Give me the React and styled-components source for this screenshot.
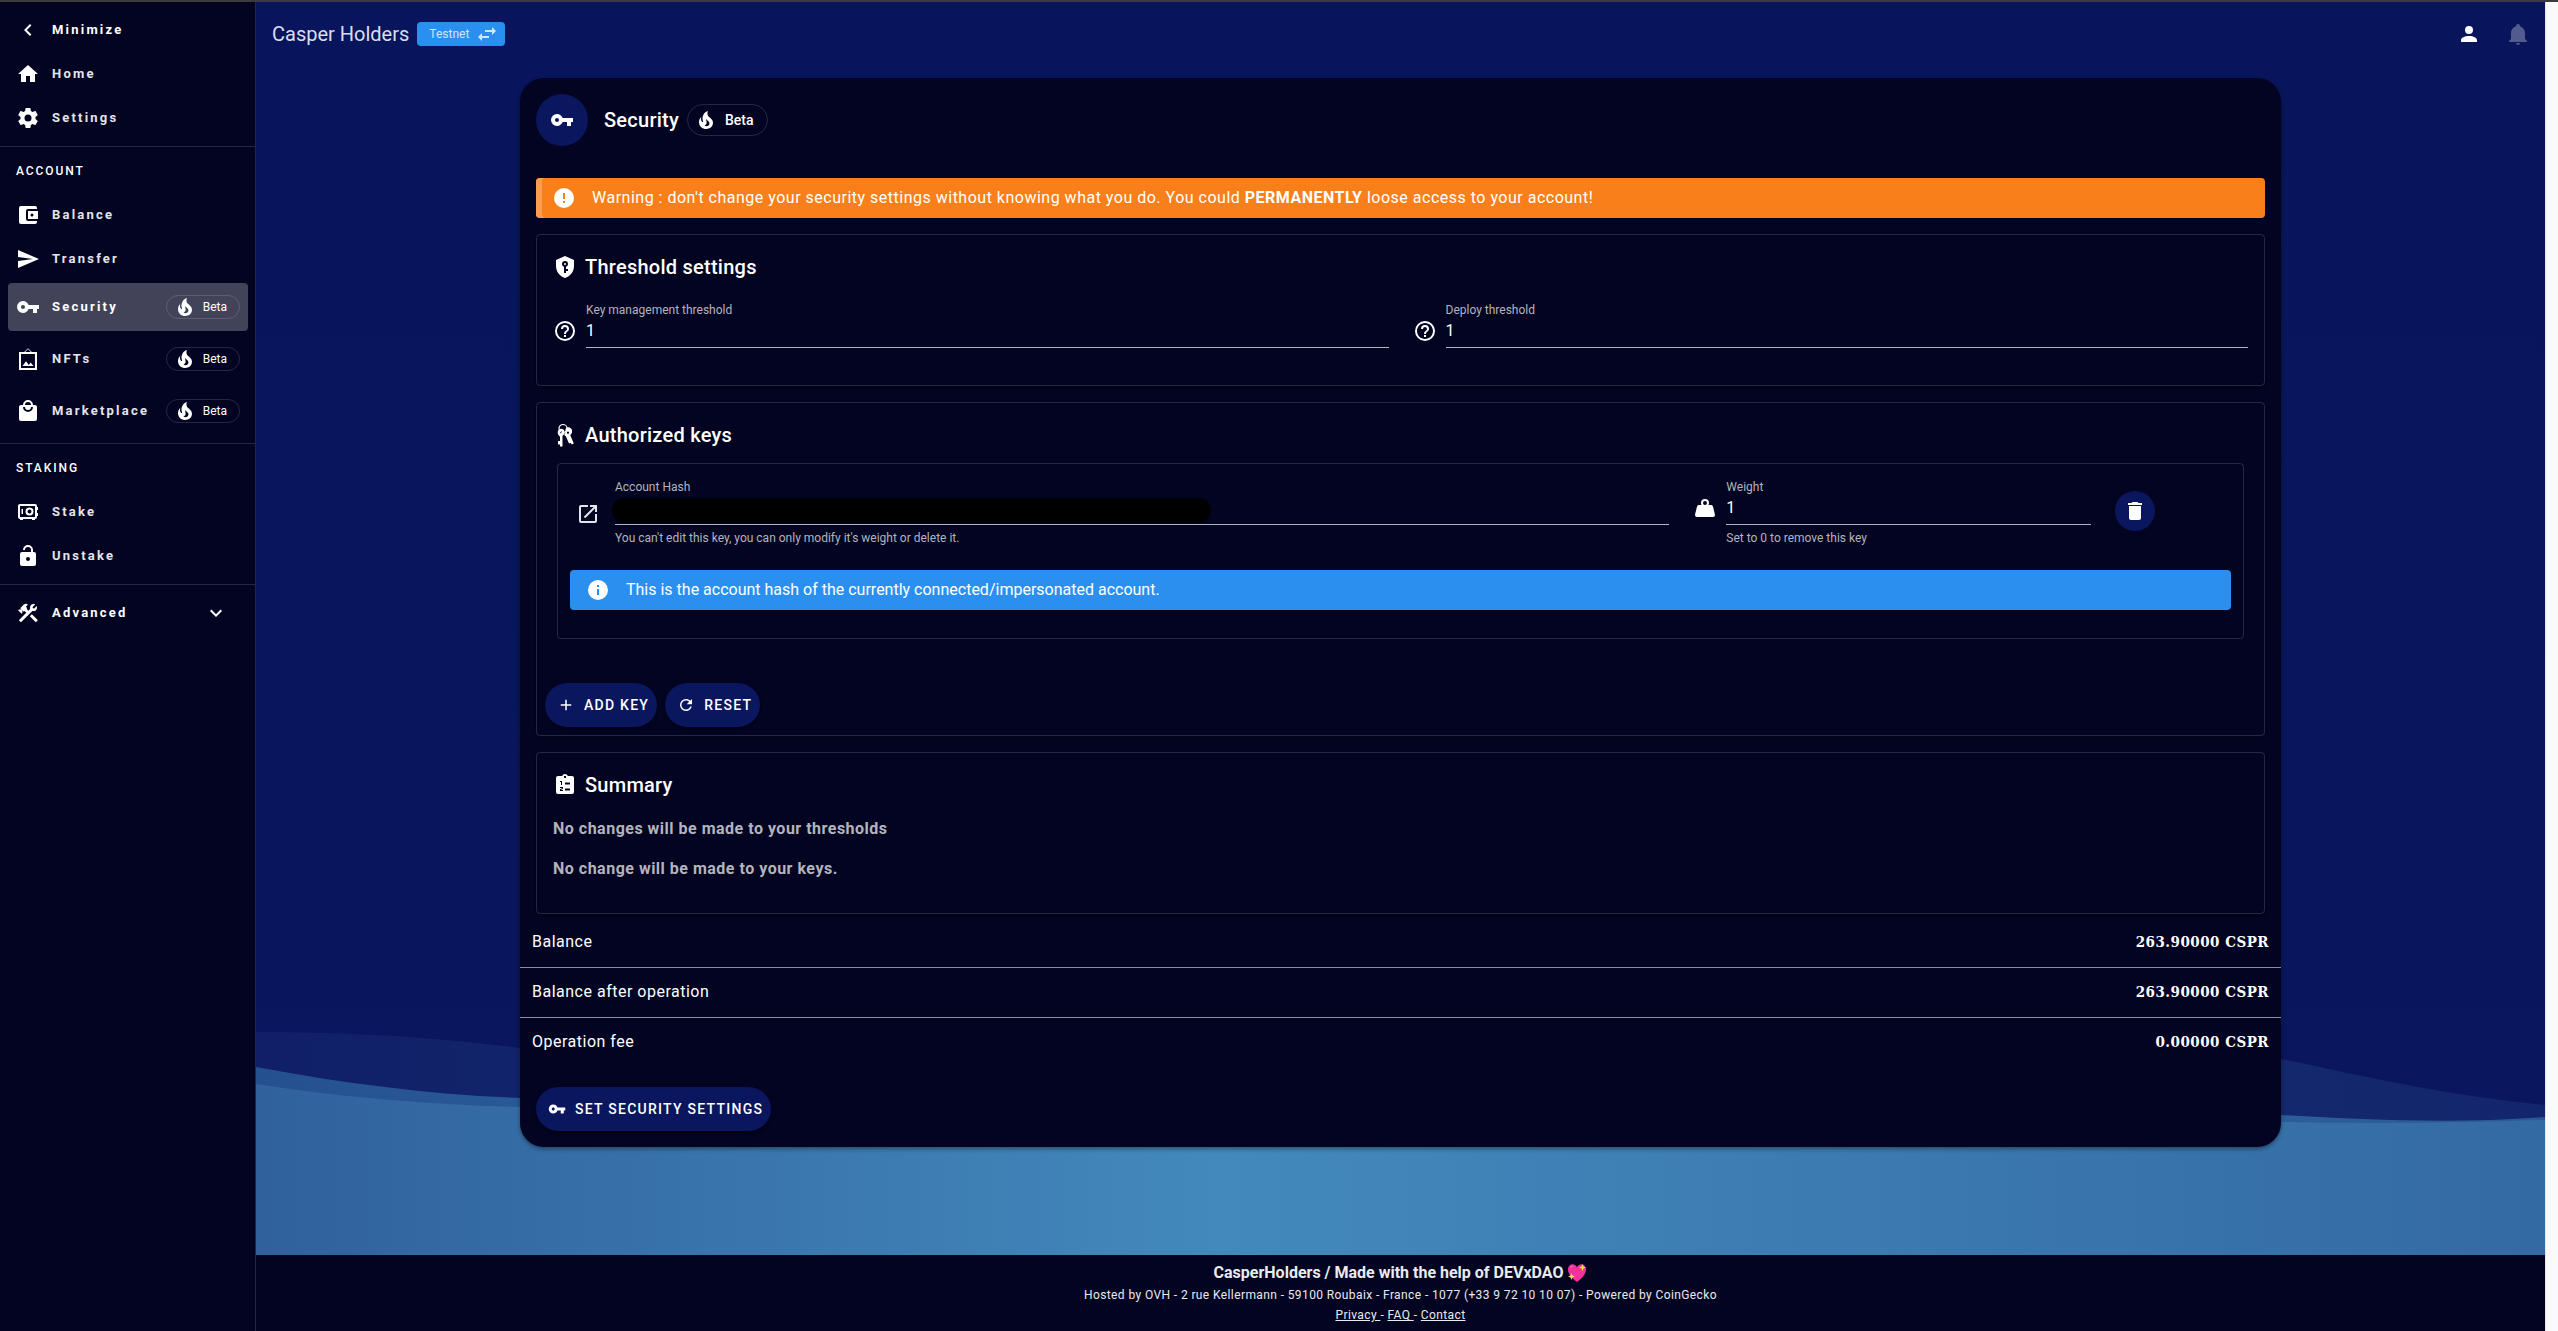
import React, { useState } from "react";
import styled, { createGlobalStyle, css } from "styled-components";

const color = {
  surface: "#020422",
  primary: "#0a165e",
  info: "#2b8fef",
  warning: "#f87f1a",
  line: "rgba(255, 255, 255, 0.14)",
};

const GlobalStyle = createGlobalStyle`
  *, *::before, *::after { box-sizing: border-box; }
  body {
    margin: 0;
    background: ${color.surface};
    color: #fff;
    font-family: Roboto, "Liberation Sans", sans-serif;
    font-size: 16px;
    line-height: 24px;
  }
  h1, h2, p, ul, dl, dd { margin: 0; padding: 0; }
  button, input { font: inherit; color: inherit; letter-spacing: inherit; }
`;

/* ---------- icons ---------- */

const paths = {
  chevronLeft: "M15.41,16.58L10.83,12L15.41,7.41L14,6L8,12L14,18L15.41,16.58Z",
  chevronDown: "M7.41,8.58L12,13.17L16.59,8.58L18,10L12,16L6,10L7.41,8.58Z",
  home: "M10,20V14H14V20H19V12H22L12,3L2,12H5V20H10Z",
  cog: "M12,15.5A3.5,3.5 0 0,1 8.5,12A3.5,3.5 0 0,1 12,8.5A3.5,3.5 0 0,1 15.5,12A3.5,3.5 0 0,1 12,15.5M19.43,12.97C19.47,12.65 19.5,12.33 19.5,12C19.5,11.67 19.47,11.34 19.43,11L21.54,9.37C21.73,9.22 21.78,8.95 21.66,8.73L19.66,5.27C19.54,5.05 19.27,4.96 19.05,5.05L16.56,6.05C16.04,5.66 15.5,5.32 14.87,5.07L14.5,2.42C14.46,2.18 14.25,2 14,2H10C9.75,2 9.54,2.18 9.5,2.42L9.13,5.07C8.5,5.32 7.96,5.66 7.44,6.05L4.95,5.05C4.73,4.96 4.46,5.05 4.34,5.27L2.34,8.73C2.21,8.95 2.27,9.22 2.46,9.37L4.57,11C4.53,11.34 4.5,11.67 4.5,12C4.5,12.33 4.53,12.65 4.57,12.97L2.46,14.63C2.27,14.78 2.21,15.05 2.34,15.27L4.34,18.73C4.46,18.95 4.73,19.03 4.95,18.95L7.44,17.94C7.96,18.34 8.5,18.68 9.13,18.93L9.5,21.58C9.54,21.82 9.75,22 10,22H14C14.25,22 14.46,21.82 14.5,21.58L14.87,18.93C15.5,18.67 16.04,18.34 16.56,17.94L19.05,18.95C19.27,19.03 19.54,18.95 19.66,18.73L21.66,15.27C21.78,15.05 21.73,14.78 21.54,14.63L19.43,12.97Z",
  wallet: "M21,18V19A2,2 0 0,1 19,21H5C3.89,21 3,20.1 3,19V5A2,2 0 0,1 5,3H19A2,2 0 0,1 21,5V6H12C10.89,6 10,6.9 10,8V16A2,2 0 0,0 12,18M12,16H22V8H12M16,13.5A1.5,1.5 0 0,1 14.5,12A1.5,1.5 0 0,1 16,10.5A1.5,1.5 0 0,1 17.5,12A1.5,1.5 0 0,1 16,13.5Z",
  send: "M2,21L23,12L2,3V10L17,12L2,14V21Z",
  key: "M7 14c-1.1 0-2-.9-2-2s.9-2 2-2 2 .9 2 2-.9 2-2 2m5.65-4C11.83 7.67 9.61 6 7 6a6 6 0 0 0-6 6 6 6 0 0 0 6 6c2.61 0 4.83-1.67 5.65-4H17v4h4v-4h2v-4H12.65z",
  fire: "M17.66 11.2C17.43 10.9 17.15 10.64 16.89 10.38C16.22 9.78 15.46 9.35 14.82 8.72C13.33 7.26 13 4.85 13.95 3C13 3.23 12.17 3.75 11.46 4.32C8.87 6.4 7.85 10.07 9.07 13.22C9.11 13.32 9.15 13.42 9.15 13.55C9.15 13.77 9 13.97 8.8 14.05C8.57 14.15 8.33 14.09 8.14 13.93C8.08 13.88 8.04 13.83 8 13.76C6.87 12.33 6.69 10.28 7.45 8.64C5.78 10 4.87 12.3 5 14.47C5.06 14.97 5.12 15.47 5.29 15.97C5.43 16.57 5.7 17.17 6 17.7C7.08 19.43 8.95 20.67 10.96 20.92C13.1 21.19 15.39 20.8 17.03 19.32C18.86 17.66 19.5 15 18.56 12.72L18.43 12.46C18.22 12 17.66 11.2 17.66 11.2M14.5 17.5C14.22 17.74 13.76 18 13.4 18.1C12.28 18.5 11.16 17.94 10.5 17.28C11.69 17 12.4 16.12 12.61 15.23C12.78 14.43 12.46 13.77 12.33 13C12.21 12.26 12.23 11.63 12.5 10.94C12.69 11.32 12.89 11.7 13.13 12C13.9 13 15.11 13.44 15.37 14.8C15.41 14.94 15.43 15.08 15.43 15.23C15.46 16.05 15.1 16.95 14.5 17.5H14.5Z",
  frame: "M10,14.29L6.5,19H17.46L14.75,15.46L12.78,17.96L10,14.29M5,21V7H18.96V21H5M12,2.1L14.85,5H9.11L12,2.1M21,5H15.83L12,1.15L8.16,5H3V23H21V5Z",
  bag: "M12,13A5,5 0 0,1 7,8H9A3,3 0 0,0 12,11A3,3 0 0,0 15,8H17A5,5 0 0,1 12,13M12,3A3,3 0 0,1 15,6H9A3,3 0 0,1 12,3M19,6H17A5,5 0 0,0 12,1A5,5 0 0,0 7,6H5C3.89,6 3,6.89 3,8V20A2,2 0 0,0 5,22H19A2,2 0 0,0 21,20V8C21,6.89 20.1,6 19,6Z",
  safe: "M4 4h15a2 2 0 0 1 2 2v1h1v3h-1v3h1v3h-1v1a2 2 0 0 1-2 2v1h-3v-1H7v1H4v-1a2 2 0 0 1-2-2V6a2 2 0 0 1 2-2zM4 6v11h15V6H4zM5.500 9h1.500v5H5.500V9zM13.500 7.500a4 4 0 1 1 0 8 4 4 0 0 1 0-8zm0 2a2 2 0 1 0 0 4 2 2 0 0 0 0-4z",
  unlock: "M18,8A2,2 0 0,1 20,10V20A2,2 0 0,1 18,22H6C4.89,22 4,21.1 4,20V10A2,2 0 0,1 6,8H15V6A3,3 0 0,0 12,3A3,3 0 0,0 9,6H7A5,5 0 0,1 12,1A5,5 0 0,1 17,6V8H18M12,17A2,2 0 0,0 14,15A2,2 0 0,0 12,13A2,2 0 0,0 10,15A2,2 0 0,0 12,17Z",
  tools: "M13.78 15.3L19.78 21.3L21.89 19.14L15.89 13.14L13.78 15.3M17.5 10.1C17.11 10.1 16.69 10.05 16.36 9.91L4.97 21.25L2.86 19.14L10.27 11.74L8.5 9.96L7.78 10.66L6.33 9.25V12.11L5.63 12.81L2.11 9.25L2.81 8.55H5.62L4.22 7.14L7.78 3.58C8.95 2.41 10.83 2.41 12 3.58L9.89 5.74L11.3 7.14L10.59 7.85L12.38 9.63L14.2 7.75C14.06 7.42 14 7 14 6.63C14 4.66 15.56 3.11 17.5 3.11C18.09 3.11 18.61 3.25 19.08 3.53L16.41 6.2L17.91 7.7L20.58 5.03C20.86 5.5 21 6 21 6.63C21 8.55 19.45 10.1 17.5 10.1Z",
  swap: "M21,9L17,5V8H10V10H17V13M7,11L3,15L7,19V16H14V14H7V11Z",
  account: "M12,4A4,4 0 0,1 16,8A4,4 0 0,1 12,12A4,4 0 0,1 8,8A4,4 0 0,1 12,4M12,14C16.42,14 20,15.79 20,18V20H4V18C4,15.79 7.58,14 12,14Z",
  bell: "M21,19V20H3V19L5,17V11C5,7.9 7.03,5.17 10,4.29C10,4.19 10,4.1 10,4A2,2 0 0,1 12,2A2,2 0 0,1 14,4C14,4.1 14,4.19 14,4.29C16.97,5.17 19,7.9 19,11V17L21,19M14,21A2,2 0 0,1 12,23A2,2 0 0,1 10,21",
  alert: "M13,13H11V7H13M13,17H11V15H13M12,2A10,10 0 0,0 2,12A10,10 0 0,0 12,22A10,10 0 0,0 22,12A10,10 0 0,0 12,2Z",
  info: "M13,9H11V7H13M13,17H11V11H13M12,2A10,10 0 0,0 2,12A10,10 0 0,0 12,22A10,10 0 0,0 22,12A10,10 0 0,0 12,2Z",
  shieldKey: "M12,8A1,1 0 0,1 13,9A1,1 0 0,1 12,10A1,1 0 0,1 11,9A1,1 0 0,1 12,8M21,11C21,16.55 17.16,21.74 12,23C6.84,21.74 3,16.55 3,11V5L12,1L21,5V11M12,6A3,3 0 0,0 9,9C9,10.31 9.83,11.42 11,11.83V18H13V16H15V14H13V11.83C14.17,11.42 15,10.31 15,9A3,3 0 0,0 12,6Z",
  help: "M11,18H13V16H11V18M12,2A10,10 0 0,0 2,12A10,10 0 0,0 12,22A10,10 0 0,0 22,12A10,10 0 0,0 12,2M12,20C7.59,20 4,16.41 4,12C4,7.59 7.59,4 12,4C16.41,4 20,7.59 20,12C20,16.41 16.41,20 12,20M12,6A4,4 0 0,0 8,10H10A2,2 0 0,1 12,8A2,2 0 0,1 14,10C14,12 11,11.75 11,15H13C13,12.75 16,12.5 16,10A4,4 0 0,0 12,6Z",
  openInNew: "M14,3V5H17.59L7.76,14.83L9.17,16.24L19,6.41V10H21V3M19,19H5V5H12V3H5C3.89,3 3,3.9 3,5V19A2,2 0 0,0 5,21H19A2,2 0 0,0 21,19V12H19V19Z",
  weight: "M12,3A4,4 0 0,1 16,7C16,7.73 15.81,8.41 15.46,9H18C18.95,9 19.75,9.67 19.95,10.56C21.96,18.57 22,18.78 22,19A2,2 0 0,1 20,21H4A2,2 0 0,1 2,19C2,18.78 2.04,18.57 4.05,10.56C4.25,9.67 5.05,9 6,9H8.54C8.19,8.41 8,7.73 8,7A4,4 0 0,1 12,3M12,5A2,2 0 0,0 10,7A2,2 0 0,0 12,9A2,2 0 0,0 14,7A2,2 0 0,0 12,5Z",
  trash: "M19,4H15.5L14.5,3H9.5L8.5,4H5V6H19M6,19A2,2 0 0,0 8,21H16A2,2 0 0,0 18,19V7H6V19Z",
  plus: "M19,13H13V19H11V13H5V11H11V5H13V11H19V13Z",
  refresh: "M17.65,6.35C16.2,4.9 14.21,4 12,4A8,8 0 0,0 4,12A8,8 0 0,0 12,20C15.73,20 18.84,17.45 19.73,14H17.65C16.83,16.33 14.61,18 12,18A6,6 0 0,1 6,12A6,6 0 0,1 12,6C13.66,6 15.14,6.69 16.22,7.78L13,11H20V4L17.65,6.35Z",
  clipboard: "M19 3h-4.180C14.400 1.840 13.300 1 12 1s-2.400.840-2.820 2H5a2 2 0 0 0-2 2v14a2 2 0 0 0 2 2h14a2 2 0 0 0 2-2V5a2 2 0 0 0-2-2zM11 3h2v2h-2zM7 8h2v4H8V9H7zM12 9.500h5v2h-5zM7 14h3v2H8.500v1H10v1H7v-2h1.500v-1H7zM12 15.500h5v2h-5z",
};

const Svg = styled.svg`
  display: block;
  flex: none;
  fill: currentColor;
  width: ${(p) => p.$size}px;
  height: ${(p) => p.$size}px;
`;

const Icon = ({ name, size = 24 }) => (
  <Svg $size={size} viewBox="0 0 24 24" aria-hidden="true">
    <path fillRule="evenodd" d={paths[name]} />
  </Svg>
);

const KeyChainIcon = () => (
  <Svg $size={24} viewBox="0 0 24 24" aria-hidden="true">
    <circle cx="10" cy="5.500" r="4" fill="none" stroke="currentColor" strokeWidth="1.200" />
    <path d="M5.500 7C7.500 5 11 5.500 11.500 8.500c.3 2-.6 3.500-2 4.300V23.500H7v-2H5v-3.500h2v-4.500C5 12.500 4 9 5.500 7zM8 8a1.100 1.100 0 1 0 .01 0z" fillRule="evenodd" />
    <path d="M14 4.500c2.500-.8 4.800.7 5.100 3.200.2 1.800-.6 3.400-1.900 4.300l3.600 8.500-2 1-1-1.500-1.800.6-3.200-7.300C10.800 12.500 11 10.500 12.500 9c-.5-1.500 0-3.500 1.500-4.500zM15 8.500a1.100 1.100 0 1 0 .01 0z" fillRule="evenodd" />
  </Svg>
);

const HeartIcon = () => (
  <Svg $size={20} viewBox="0 0 20 20" aria-label="sparkling heart" role="img">
    <path d="M10 19C4 14.500 1 10.500 1 6.200 1 3.200 3 1.200 5.500 1.200c1.900 0 3.600 1.200 4.500 3 .9-1.800 2.600-3 4.500-3C17 1.200 19 3.200 19 6.200c0 4.300-3 8.300-9 12.800z" fill="#f5329b" />
    <path d="M3 5c.6-1.600 2-2.300 3.600-1.900C5 3.600 3.800 4.500 3 5z" fill="#ff9fd0" />
    <path d="M15.500 1l1 2.500 2.500 1-2.500 1-1 2.500-1-2.500-2.500-1 2.500-1zM4.500 10l1 2.500L8 13.500l-2.500 1-1 2.500-1-2.500-2.500-1 2.500-1z" fill="#ffd94a" />
  </Svg>
);

/* ---------- shell ---------- */

const Shell = styled.div`
  display: flex;
  min-height: 100vh;
  border-top: 2px solid #3b3b3b;
`;

const Sidebar = styled.nav`
  flex: none;
  width: 256px;
  background: ${color.surface};
  border-right: 1px solid #26273a;
`;

const NavSection = styled.div`
  padding: ${(p) => (p.$titled ? "4px 0 8px" : "8px 0")};
  border-bottom: ${(p) => (p.$last ? "none" : `1px solid ${color.line}`)};
`;

const NavTitle = styled.h2`
  display: flex;
  align-items: center;
  height: 40px;
  margin-bottom: 4px;
  padding-left: 16px;
  font-size: 12px;
  font-weight: 500;
  letter-spacing: 0.16em;
  text-transform: uppercase;
`;

const NavList = styled.div`
  display: flex;
  flex-direction: column;
  gap: 4px;
  padding: 0 7px 0 8px;
`;

const navRow = css`
  display: flex;
  align-items: center;
  gap: 12px;
  width: 100%;
  height: ${(p) => (p.$tall ? 48 : 40)}px;
  padding: 0 8px;
  border: 0;
  border-radius: 4px;
  background: ${(p) => (p.$active ? "#424359" : "transparent")};
  color: #fff;
  font-size: 13px;
  font-weight: 700;
  line-height: 16px;
  letter-spacing: 0.17em;
  text-align: left;
  text-decoration: none;
`;

const NavLink = styled.a`${navRow}`;
const NavButton = styled.button`
  ${navRow}
  cursor: pointer;
`;

const NavLabel = styled.span`
  flex: 1;
  color: ${(p) => (p.$bright ? "#fff" : "#e4e5ea")};
`;

const ChevronSlot = styled.span`
  padding-right: 12px;
`;

const Chip = styled.span`
  display: inline-flex;
  flex: none;
  align-items: center;
  gap: ${(p) => (p.$large ? 7 : 6)}px;
  height: ${(p) => (p.$large ? 32 : 24)}px;
  padding: ${(p) => (p.$large ? "0 13px 0 6px" : "0 12px 0 6px")};
  border: 1px solid ${color.line};
  border-radius: 16px;
  font-size: ${(p) => (p.$large ? 14 : 12)}px;
  font-weight: ${(p) => (p.$large ? 500 : 400)};
  line-height: 20px;
  letter-spacing: normal;
`;

const Beta = ({ large }) => (
  <Chip $large={large}>
    <Icon name="fire" />
    Beta
  </Chip>
);

const Page = styled.div`
  position: relative;
  z-index: 0;
  display: flex;
  flex: 1;
  flex-direction: column;
  min-width: 0;
  background: linear-gradient(#08155c, #0a165e);
`;

const TopBar = styled.header`
  display: flex;
  align-items: center;
  height: 64px;
  padding: 0 16px;
`;

const Brand = styled.h1`
  margin-right: 8px;
  color: #dadeea;
  font-size: 20px;
  font-weight: 400;
  line-height: 24px;
`;

const NetworkButton = styled.button`
  display: flex;
  align-items: center;
  gap: 6px;
  height: 24px;
  padding: 0 6px 0 12px;
  border: 0;
  border-radius: 4px;
  background: ${color.info};
  color: #d3e5fb;
  font-size: 12px;
  cursor: pointer;
`;

const TopActions = styled.div`
  display: flex;
  gap: 13px;
  margin-left: auto;
  margin-right: -7px;
`;

const IconButton = styled.button`
  display: grid;
  place-items: center;
  width: 36px;
  height: 36px;
  padding: 0;
  border: 0;
  background: none;
  color: ${(p) => (p.disabled ? "rgba(255, 255, 255, 0.3)" : "#fff")};
  cursor: pointer;
`;

const Scrollbar = styled.div`
  flex: none;
  width: 13px;
  background: #fafafa;
  border-left: 1px solid #e6e6e6;
`;

/* ---------- backdrop ---------- */

const Backdrop = styled.svg`
  position: absolute;
  left: 0;
  bottom: 76px;
  z-index: -1;
  width: 100%;
  height: 240px;
`;

const Waves = () => (
  <Backdrop viewBox="0 0 2289 240" preserveAspectRatio="none" aria-hidden="true">
    <defs>
      <linearGradient id="waveBack">
        <stop offset="0" stopColor="#101f68" />
        <stop offset="0.42" stopColor="#163070" />
        <stop offset="1" stopColor="#13266d" />
      </linearGradient>
      <linearGradient id="waveMiddle">
        <stop offset="0" stopColor="#255090" />
        <stop offset="0.42" stopColor="#3470aa" />
        <stop offset="1" stopColor="#2b5998" />
      </linearGradient>
      <linearGradient id="waveFront">
        <stop offset="0" stopColor="#30619d" />
        <stop offset="0.42" stopColor="#4389bc" />
        <stop offset="1" stopColor="#346aa4" />
      </linearGradient>
    </defs>
    <path fill="url(#waveBack)" d="M0 17C90 17 180 22 264 33C700 95 1400 -30 2025 44C2110 62 2200 82 2289 90V240H0Z" />
    <path fill="url(#waveMiddle)" d="M0 52C90 69 180 80 264 83C800 110 1400 60 2025 100C2110 105 2200 109 2289 102V240H0Z" />
    <path fill="url(#waveFront)" d="M0 69C90 83 180 90 264 92C800 120 1400 80 2025 107C2110 109 2200 108 2289 105V240H0Z" />
  </Backdrop>
);

/* ---------- card ---------- */

const Content = styled.main`
  flex: 1;
  width: 100%;
  max-width: 1785px;
  margin: 0 auto;
  padding: 12px;
`;

const Card = styled.section`
  padding-bottom: 16px;
  border-radius: 24px;
  background: ${color.surface};
  box-shadow: 0 2px 4px rgba(0, 0, 0, 0.4);
`;

const CardBody = styled.div`
  display: flex;
  flex-direction: column;
  gap: 16px;
  padding: 16px 16px 4px;
`;

const CardHeader = styled.div`
  display: flex;
  align-items: center;
  margin-bottom: 16px;
`;

const Avatar = styled.span`
  display: grid;
  place-items: center;
  width: 52px;
  height: 52px;
  margin-right: 16px;
  border-radius: 50%;
  background: ${color.primary};
`;

const Title = styled.h2`
  font-size: 20px;
  font-weight: 500;
  line-height: 32px;
  letter-spacing: 0.0125em;
`;

const CardTitle = styled(Title)`
  margin-right: 8px;
`;

const Alert = styled.div`
  display: flex;
  align-items: center;
  gap: 16px;
  min-height: 40px;
  padding: 8px 16px;
  border-radius: 4px;
  background: ${(p) => color[p.$tone]};
  box-shadow: ${(p) => (p.$marked ? "inset 6px 0 0 #fb9c4f" : "none")};
  letter-spacing: ${(p) => (p.$marked ? "0.03125em" : "normal")};
`;

const Panel = styled.section`
  padding: 16px 16px ${(p) => p.$bottom}px;
  border: 1px solid ${color.line};
  border-radius: 4px;
  box-shadow: 0 2px 3px rgba(0, 0, 0, 0.3);
`;

const PanelTitle = styled.div`
  display: flex;
  align-items: center;
  gap: 8px;
`;

const TwoColumns = styled.div`
  display: grid;
  grid-template-columns: 1fr 1fr;
  gap: 24px;
  margin-top: 19px;
`;

const FieldRow = styled.div`
  display: flex;
  gap: 9px;
`;

const FieldIcon = styled.span`
  padding-top: 17px;
`;

const Field = styled.div`
  display: flex;
  flex: 1;
  flex-direction: column;
  min-width: 0;
  color: #b3b4bd;
  font-size: 12px;
  line-height: 16px;
`;

const TextInput = styled.input`
  width: 100%;
  height: 30px;
  padding: 0 0 4px;
  border: 0;
  border-bottom: 1px solid #b3b4bd;
  border-radius: 0;
  outline: 0;
  background: transparent;
  color: #fff;
  font-size: 16px;
  line-height: 24px;
`;

const Redaction = styled.div`
  display: flex;
  height: 30px;
  padding: 3px 0 1px;
  border-bottom: 1px solid #b3b4bd;
`;

const HiddenValue = styled.input`
  width: 599px;
  max-width: 100%;
  height: 25px;
  margin-left: -3px;
  padding: 0 12px;
  border: 0;
  border-radius: 13px;
  outline: 0;
  background: #000;
`;

const Hint = styled.span`
  margin-top: 5px;
`;

const KeyCard = styled.div`
  margin: 12px 4px 44px;
  padding: 15px 0 28px;
  border: 1px solid ${color.line};
  border-radius: 4px;
`;

const KeyFields = styled.div`
  display: grid;
  grid-template-columns: 8fr 3fr 1fr;
  margin-bottom: 24px;
`;

const KeyCell = styled.div`
  min-width: 0;
  padding: 0 12px;
`;

const KeyAlert = styled.div`
  padding: 0 12px;
`;

const OpenLink = styled.a`
  display: grid;
  place-items: center;
  width: 36px;
  height: 36px;
  margin-top: 17px;
  color: #e4e5ea;
`;

const DeleteButton = styled(IconButton)`
  width: 40px;
  height: 40px;
  margin-top: 12px;
  border-radius: 50%;
  background: ${color.primary};
`;

const ButtonRow = styled.div`
  display: flex;
  gap: 8px;
  margin: 0 -8px;
`;

const PillButton = styled.button`
  display: inline-flex;
  align-items: center;
  gap: 9px;
  height: 44px;
  padding: 0 8px 0 12px;
  border: 0;
  border-radius: 22px;
  background: ${color.primary};
  box-shadow: 0 2px 3px rgba(0, 0, 0, 0.4);
  font-size: 14px;
  font-weight: 500;
  line-height: 20px;
  letter-spacing: 0.09em;
  text-transform: uppercase;
  cursor: pointer;
`;

const SummaryText = styled.p`
  margin-top: 16px;
  color: #b3b4bd;
  font-weight: 700;
  letter-spacing: 0.03125em;
`;

const Totals = styled.dl`
  margin-bottom: 19px;
`;

const TotalRow = styled.div`
  display: flex;
  align-items: center;
  justify-content: space-between;
  padding: 12px 12px 13px;
  border-bottom: 1px solid #8d8e9b;
  letter-spacing: 0.03125em;

  &:last-child {
    border-bottom-color: transparent;
  }
`;

const Amount = styled.dd`
  font-family: "DejaVu Serif Condensed", "DejaVu Serif", serif;
  font-size: 15px;
  font-weight: 700;
`;

const CardActions = styled.div`
  padding: 0 16px;
`;

/* ---------- footer ---------- */

const Footer = styled.footer`
  height: 76px;
  padding-top: 6px;
  background: ${color.surface};
  color: #e9eaee;
  font-size: 12px;
  line-height: 20px;
  letter-spacing: 0.033em;
  text-align: center;
`;

const FooterTitle = styled.p`
  display: flex;
  align-items: center;
  justify-content: center;
  gap: 4px;
  font-size: 16px;
  font-weight: 700;
  line-height: 24px;
  letter-spacing: normal;
`;

const FooterLink = styled.a`
  color: inherit;
  white-space: pre;
`;

/* ---------- page ---------- */

const accountLinks = [
  { icon: "wallet", label: "Balance" },
  { icon: "send", label: "Transfer" },
  { icon: "key", label: "Security", beta: true, active: true },
  { icon: "frame", label: "NFTs", beta: true },
  { icon: "bag", label: "Marketplace", beta: true },
];

const stakingLinks = [
  { icon: "safe", label: "Stake" },
  { icon: "unlock", label: "Unstake" },
];

const totals = [
  ["Balance", "263.90000 CSPR"],
  ["Balance after operation", "263.90000 CSPR"],
  ["Operation fee", "0.00000 CSPR"],
];

const NavItem = ({ icon, label, beta, active }) => (
  <NavLink href="#" $tall={beta} $active={active} aria-current={active ? "page" : undefined}>
    <Icon name={icon} />
    <NavLabel $bright={active}>{label}</NavLabel>
    {beta && <Beta />}
  </NavLink>
);

const NumberField = ({ id, icon, label, hint, value, onChange }) => (
  <FieldRow>
    <FieldIcon>
      <Icon name={icon} />
    </FieldIcon>
    <Field>
      <label htmlFor={id}>{label}</label>
      <TextInput id={id} inputMode="numeric" value={value} onChange={(e) => onChange(e.target.value)} />
      {hint && <Hint>{hint}</Hint>}
    </Field>
  </FieldRow>
);

export default function App() {
  const [management, setManagement] = useState("1");
  const [deploy, setDeploy] = useState("1");
  const [weight, setWeight] = useState("1");

  return (
    <>
      <GlobalStyle />
      <Shell>
        <Sidebar>
          <NavSection>
            <NavList>
              <NavButton type="button">
                <Icon name="chevronLeft" />
                <NavLabel $bright>Minimize</NavLabel>
              </NavButton>
              <NavItem icon="home" label="Home" />
              <NavItem icon="cog" label="Settings" />
            </NavList>
          </NavSection>
          <NavSection $titled>
            <NavTitle>Account</NavTitle>
            <NavList>
              {accountLinks.map((link) => (
                <NavItem key={link.label} {...link} />
              ))}
            </NavList>
          </NavSection>
          <NavSection $titled>
            <NavTitle>Staking</NavTitle>
            <NavList>
              {stakingLinks.map((link) => (
                <NavItem key={link.label} {...link} />
              ))}
            </NavList>
          </NavSection>
          <NavSection $last>
            <NavList>
              <NavButton type="button" aria-expanded="false">
                <Icon name="tools" />
                <NavLabel $bright>Advanced</NavLabel>
                <ChevronSlot>
                  <Icon name="chevronDown" />
                </ChevronSlot>
              </NavButton>
            </NavList>
          </NavSection>
        </Sidebar>

        <Page>
          <Waves />
          <TopBar>
            <Brand>Casper Holders</Brand>
            <NetworkButton type="button">
              Testnet
              <Icon name="swap" />
            </NetworkButton>
            <TopActions>
              <IconButton type="button" aria-label="Account">
                <Icon name="account" />
              </IconButton>
              <IconButton type="button" aria-label="Notifications" disabled>
                <Icon name="bell" />
              </IconButton>
            </TopActions>
          </TopBar>

          <Content>
            <Card>
              <CardBody>
                <CardHeader>
                  <Avatar>
                    <Icon name="key" />
                  </Avatar>
                  <CardTitle>Security</CardTitle>
                  <Beta large />
                </CardHeader>

                <Alert $tone="warning" $marked role="alert">
                  <Icon name="alert" />
                  <span>
                    Warning : don't change your security settings without knowing what you do. You could{" "}
                    <strong>PERMANENTLY</strong> loose access to your account!
                  </span>
                </Alert>

                <Panel $bottom={37}>
                  <PanelTitle>
                    <Icon name="shieldKey" />
                    <Title>Threshold settings</Title>
                  </PanelTitle>
                  <TwoColumns>
                    <NumberField id="management" icon="help" label="Key management threshold" value={management} onChange={setManagement} />
                    <NumberField id="deploy" icon="help" label="Deploy threshold" value={deploy} onChange={setDeploy} />
                  </TwoColumns>
                </Panel>

                <Panel $bottom={8}>
                  <PanelTitle>
                    <KeyChainIcon />
                    <Title>Authorized keys</Title>
                  </PanelTitle>
                  <KeyCard>
                    <KeyFields>
                      <KeyCell>
                        <FieldRow>
                          <OpenLink href="#" aria-label="Open account in explorer">
                            <Icon name="openInNew" />
                          </OpenLink>
                          <Field>
                            <label htmlFor="hash">Account Hash</label>
                            <Redaction>
                              <HiddenValue id="hash" readOnly />
                            </Redaction>
                            <Hint>You can't edit this key, you can only modify it's weight or delete it.</Hint>
                          </Field>
                        </FieldRow>
                      </KeyCell>
                      <KeyCell>
                        <NumberField id="weight" icon="weight" label="Weight" hint="Set to 0 to remove this key" value={weight} onChange={setWeight} />
                      </KeyCell>
                      <KeyCell>
                        <DeleteButton type="button" aria-label="Delete key">
                          <Icon name="trash" />
                        </DeleteButton>
                      </KeyCell>
                    </KeyFields>
                    <KeyAlert>
                      <Alert $tone="info">
                        <Icon name="info" />
                        <span>This is the account hash of the currently connected/impersonated account.</span>
                      </Alert>
                    </KeyAlert>
                  </KeyCard>
                  <ButtonRow>
                    <PillButton type="button">
                      <Icon name="plus" size={18} />
                      Add key
                    </PillButton>
                    <PillButton type="button">
                      <Icon name="refresh" size={18} />
                      Reset
                    </PillButton>
                  </ButtonRow>
                </Panel>

                <Panel $bottom={32}>
                  <PanelTitle>
                    <Icon name="clipboard" />
                    <Title>Summary</Title>
                  </PanelTitle>
                  <SummaryText>No changes will be made to your thresholds</SummaryText>
                  <SummaryText>No change will be made to your keys.</SummaryText>
                </Panel>
              </CardBody>

              <Totals>
                {totals.map(([label, amount]) => (
                  <TotalRow key={label}>
                    <dt>{label}</dt>
                    <Amount>{amount}</Amount>
                  </TotalRow>
                ))}
              </Totals>

              <CardActions>
                <PillButton type="button">
                  <Icon name="key" size={18} />
                  Set security settings
                </PillButton>
              </CardActions>
            </Card>
          </Content>

          <Footer>
            <FooterTitle>
              CasperHolders / Made with the help of DEVxDAO
              <HeartIcon />
            </FooterTitle>
            <p>Hosted by OVH - 2 rue Kellermann - 59100 Roubaix - France - 1077 (+33 9 72 10 10 07) - Powered by CoinGecko</p>
            <p>
              <FooterLink href="#">{"Privacy "}</FooterLink>- <FooterLink href="#">{"FAQ "}</FooterLink>-{" "}
              <FooterLink href="#">Contact</FooterLink>
            </p>
          </Footer>
        </Page>
        <Scrollbar />
      </Shell>
    </>
  );
}
